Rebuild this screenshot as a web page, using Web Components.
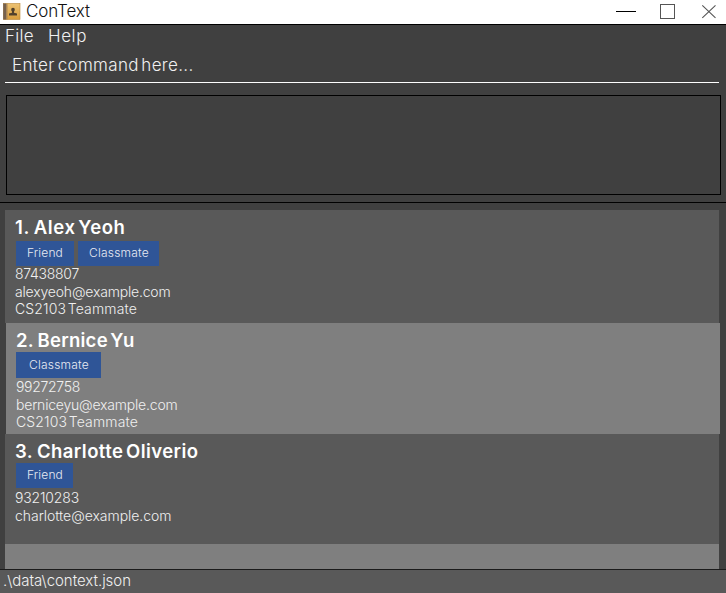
<!DOCTYPE html>
<html lang="en"><head><meta charset="utf-8"><title>ConText</title>
<style>html,body{margin:0;height:100%;overflow:hidden;background:#404040}body{font-family:Inter,"Liberation Sans",sans-serif;color:#f0f0f0}</style></head>
<body><app-window></app-window>
<script>
// A line of text whose letter spacing is set so that it spans its "w" attribute.
class FitText extends HTMLElement{
  connectedCallback(){
    const r=this.attachShadow({mode:'open'});
    r.innerHTML='<style>:host{display:block;white-space:nowrap}span{display:inline-block;word-spacing:var(--word,-1px)}::slotted(i){word-spacing:-2.6px}</style><span><slot></slot></span>';
    const s=r.querySelector('span'),n=this.textContent.length;
    const w=s.getBoundingClientRect().width;
    s.style.letterSpacing=((+this.getAttribute('w')-w)/n)+'px';
  }
}
class TitleBar extends HTMLElement{
  connectedCallback(){
    this.attachShadow({mode:'open'}).innerHTML=`<style>
    :host{display:flex;height:24px;background:#fff;border-bottom:1px solid #000;color:#111}
    .logo{margin:3px 0 0 3px;flex:none}
    fit-text{font-size:17px;font-weight:300;line-height:23px;margin-left:5px;flex:1}
    .controls{flex:none}
    </style>
    <svg class="logo" width="18" height="18" viewBox="0 0 18 18"><defs><linearGradient id="g" x2="0" y2="1"><stop stop-color="#ecc273"/><stop offset="1" stop-color="#d99d3c"/></linearGradient></defs><rect x=".5" y=".5" width="16.500" height="16" fill="url(#g)" stroke="#b98636" stroke-width=".6"/><path d="M.2.5H3v16H.2z" fill="#75614e"/><path d="M3 .5h1.500v16H3z" fill="#a98655"/><path d="M10 4.700a1.800 1.800 0 0 1 1.800 2c0 .9-.5 1.400-.8 1.900v1.200l3 .7v2H6v-2l3-.7V8.600c-.5-.5-.8-1-.8-1.900a1.800 1.800 0 0 1 1.800-2z" fill="#51402b"/></svg>
    <fit-text w="64">ConText</fit-text>
    <svg class="controls" width="126" height="24" viewBox="600 0 126 24" fill="none"><path d="M616 11.5h20" stroke="#000"/><rect x="660.500" y="4.500" width="14" height="14" stroke="#555"/><path d="M702.300 5.300l13.200 12.500M715.500 5.300l-13.200 12.500" stroke="#555" stroke-width="1.100"/></svg>`;
  }
}
class MenuBar extends HTMLElement{
  connectedCallback(){
    this.attachShadow({mode:'open'}).innerHTML=`<style>:host{display:flex;height:23px;padding-left:5px;font-size:17px;font-weight:300;line-height:22px}fit-text+fit-text{margin-left:14px}</style>
    <fit-text w="29">File</fit-text><fit-text w="39">Help</fit-text>`;
  }
}
class CommandBox extends HTMLElement{
  connectedCallback(){
    this.attachShadow({mode:'open'}).innerHTML=`<style>:host{display:block;height:34px;margin:0 7px 0 5px;padding-left:7px;border-bottom:1px solid #fff;font-size:17px;font-weight:300;line-height:35px;--word:-2px}fit-text{height:34px}</style>
    <fit-text w="181.5">Enter command<i> </i>here...</fit-text>`;
  }
}
class ResultBox extends HTMLElement{
  connectedCallback(){this.attachShadow({mode:'open'}).innerHTML='<style>:host{display:block;box-sizing:border-box;height:100px;margin:12px 5px 0 6px;border:1px solid #000}</style>';}
}
class TagChip extends HTMLElement{
  connectedCallback(){
    const a=n=>this.getAttribute(n);
    this.attachShadow({mode:'open'}).innerHTML=`<style>:host{display:block;box-sizing:border-box;width:${a('box')}px;height:${a('h')||25}px;padding-left:${a('pad')||11}px;background:#2f5597;font-size:12px;font-weight:300;line-height:${a('h')==='26'?26:24}px;color:#e7ebf3}</style>
    <fit-text w="${a('w')}">${a('label')}</fit-text>`;
  }
}
class PersonCard extends HTMLElement{
  connectedCallback(){
    this.attachShadow({mode:'open'}).innerHTML=`<style>
    :host{display:block;box-sizing:border-box;padding:6px 0 0 10px;background:#595959}
    .head{height:49.400px}
    .name{font-size:18.500px;font-weight:600;line-height:22px;height:var(--name,23px);color:#fff}
    .tags{display:flex;gap:4px;margin-left:var(--tag,1px)}
    ::slotted(fit-text){font-size:14px;font-weight:300;line-height:17.500px}
    </style><div class="head"><fit-text class="name" w="${this.getAttribute('w')}">${this.getAttribute('name').replace(/ (\S+)$/,'<i> </i>$1')}</fit-text><div class="tags"><slot name="tag"></slot></div></div><slot></slot>`;
  }
}
class PersonList extends HTMLElement{
  connectedCallback(){
    this.attachShadow({mode:'open'}).innerHTML=`<style>
    :host{display:block;box-sizing:border-box;border-top:1px solid #000;margin-top:7px;height:367px;padding:7px 7px 0 5px}
    .a{height:113px;--name:25px}.b{height:111px;background:#7f7f7f;margin:0 -1px 0 1px;--tag:0px;box-sizing:border-box}
    .c{height:110px}.next{height:25px;background:#7f7f7f}
    </style>
    <person-card class="a" name="1. Alex Yeoh" w="110.5">
      <tag-chip slot="tag" box="58" w="36" label="Friend"></tag-chip><tag-chip slot="tag" box="81" w="60" label="Classmate"></tag-chip>
      <fit-text w="64">87438807</fit-text><fit-text w="155.5">alexyeoh@example.com</fit-text><fit-text w="122">CS2103<i> </i>Teammate</fit-text></person-card>
    <person-card class="b" name="2. Bernice Yu" w="118.5">
      <tag-chip slot="tag" box="85" h="26" pad="13" w="60" label="Classmate"></tag-chip>
      <fit-text w="64">99272758</fit-text><fit-text w="161.5">berniceyu@example.com</fit-text><fit-text w="122">CS2103<i> </i>Teammate</fit-text></person-card>
    <person-card class="c" name="3. Charlotte Oliverio" w="183.5">
      <tag-chip slot="tag" box="57" w="36" label="Friend"></tag-chip>
      <fit-text w="64">93210283</fit-text><fit-text w="156.5">charlotte@example.com</fit-text></person-card>
    <div class="next"></div>`;
  }
}
class StatusBar extends HTMLElement{
  connectedCallback(){
    this.attachShadow({mode:'open'}).innerHTML=`<style>:host{display:block;height:23px;background:#595959;border-top:1px solid #1b1b1b;padding-left:3px;font-size:15px;font-weight:300;line-height:21px}</style>
    <fit-text w="128">.\\data\\context.json</fit-text>`;
  }
}
class AppWindow extends HTMLElement{
  connectedCallback(){
    this.attachShadow({mode:'open'}).innerHTML=`<style>:host{display:flex;flex-direction:column;width:726px;height:593px;background:#404040;overflow:hidden}:host>*{flex:none}</style>
    <title-bar></title-bar><menu-bar></menu-bar><command-box></command-box><result-box></result-box><person-list></person-list><status-bar></status-bar>`;
  }
}
customElements.define('fit-text',FitText);
customElements.define('title-bar',TitleBar);
customElements.define('menu-bar',MenuBar);
customElements.define('command-box',CommandBox);
customElements.define('result-box',ResultBox);
customElements.define('tag-chip',TagChip);
customElements.define('person-card',PersonCard);
customElements.define('person-list',PersonList);
customElements.define('status-bar',StatusBar);
customElements.define('app-window',AppWindow);
</script></body></html>
